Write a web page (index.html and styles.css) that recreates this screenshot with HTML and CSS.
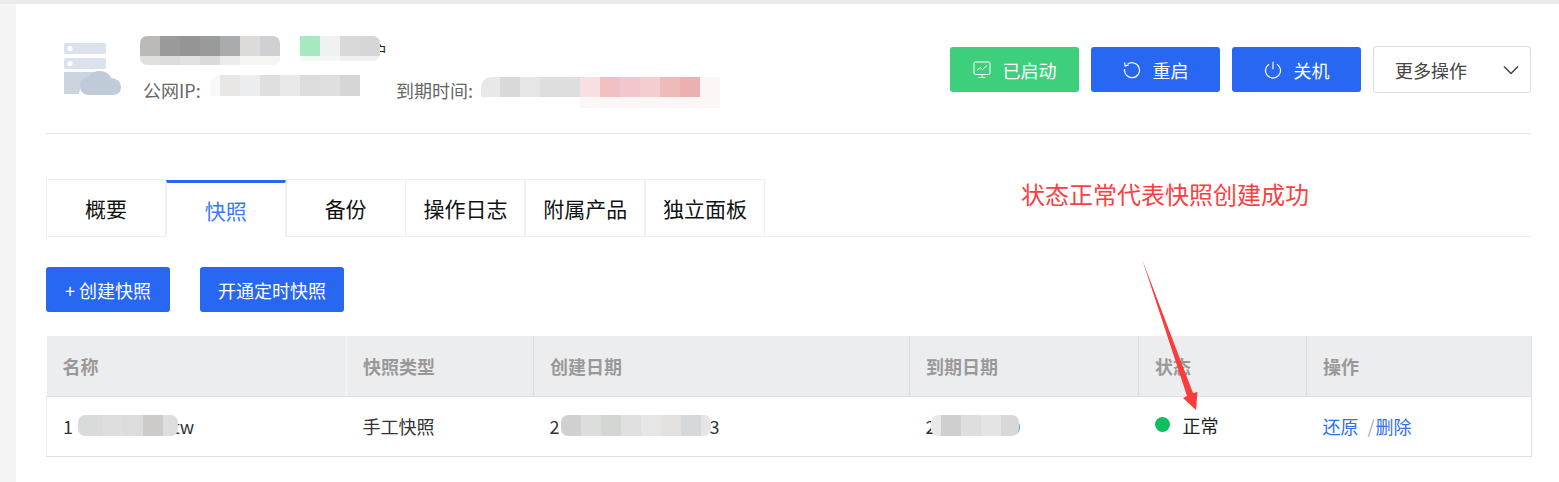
FILE: index.html
```html
<!DOCTYPE html>
<html lang="en">
<head>
  <meta charset="UTF-8" />
  <title>快照</title>
  <link rel="stylesheet" href="styles.css">
</head>
<body>
  <div class="card">
    <div class="head">
      <div class="summary">
        <svg class="server-icon" viewBox="63 42 60 54">
          <rect x="64" y="43" width="42" height="11" rx="2" fill="#dbe2ec" />
          <circle cx="70" cy="48.5" r="2.6" fill="#fff" />
          <rect x="64" y="58" width="42" height="11" rx="2" fill="#dbe2ec" />
          <circle cx="70" cy="63.5" r="2.6" fill="#fff" />
          <path d="M64 72h42l-16 4q-9 4-11 18h-15z" fill="#ccd4df" />
          <path d="M88 95q-8-1-8-9 0-8 9-10 4-5 11-5 8 0 11 7 10 1 10 9 0 8-9 8z" fill="#c0cbd9" />
        </svg>
        <div class="info">
          <div class="title-row">
            <span class="mosaic m-title-a"></span>
            <span class="mosaic m-title-b"></span>
            <span class="title-end">户</span>
          </div>
          <div class="meta-row">
            <span class="meta-label ip-label">公网IP:</span>
            <span class="mosaic m-ip"></span>
            <span class="meta-label date-label">到期时间:</span>
            <span class="mosaic m-date"></span>
          </div>
        </div>
      </div>
      <div class="head-actions">
        <button class="btn btn-green">
          <svg class="btn-icon" viewBox="0 0 18 18" fill="none" stroke="#fff" stroke-width="1">
            <rect x="1" y="1" width="16" height="12.5" rx="1.5" />
            <path d="M4 9.5l3-3 2.5 2 4.5-4" />
            <path d="M5.5 16.5h7M9 13.5v3" />
          </svg>
          已启动
        </button>
        <button class="btn">
          <svg class="btn-icon" viewBox="0 0 18 18" fill="none" stroke="#fff" stroke-width="1.2">
            <path d="M4.5 3.2A7.5 7.5 0 1 1 1.6 8" />
            <path d="M1.6 1.4l.6 3.6 3.4-.9" />
          </svg>
          重启
        </button>
        <button class="btn">
          <svg class="btn-icon" viewBox="0 0 18 18" fill="none" stroke="#fff" stroke-width="1.2">
            <path d="M5 3.2a7.5 7.5 0 1 0 8 0" />
            <path d="M9 .8v7.4" />
          </svg>
          关机
        </button>
        <div class="more">
          更多操作
          <svg class="chevron" viewBox="0 0 16 10" fill="none" stroke="#444" stroke-width="1.5">
            <path d="M1 1.5l7 7 7-7" />
          </svg>
        </div>
      </div>
    </div>

    <div class="tabs">
      <div class="tab">概要</div>
      <div class="tab active">快照</div>
      <div class="tab">备份</div>
      <div class="tab">操作日志</div>
      <div class="tab">附属产品</div>
      <div class="tab">独立面板</div>
    </div>

    <div class="toolbar">
      <button class="btn btn-create">+ 创建快照</button>
      <button class="btn btn-timer">开通定时快照</button>
    </div>

    <table class="snapshots">
      <colgroup>
        <col class="col-name"><col class="col-type"><col class="col-created"><col class="col-expire"><col class="col-status"><col class="col-ops">
      </colgroup>
      <thead>
        <tr>
          <th>名称</th>
          <th>快照类型</th>
          <th>创建日期</th>
          <th>到期日期</th>
          <th>状态</th>
          <th>操作</th>
        </tr>
      </thead>
      <tbody>
        <tr>
          <td><span class="cell-flex">1<span class="mosaic m-name"></span><span class="tail-name">tw</span></span></td>
          <td>手工快照</td>
          <td><span class="cell-flex">2<span class="mosaic m-created"></span><span class="tail-created">3</span></span></td>
          <td><span class="cell-flex">2<span class="mosaic m-expire"></span><span class="tail-expire">9</span></span></td>
          <td><span class="status"><i class="dot"></i>正常</span></td>
          <td class="ops"><a>还原</a><span class="sep">/</span><a>删除</a></td>
        </tr>
      </tbody>
    </table>
  </div>

  <div class="note">状态正常代表快照创建成功</div>
  <svg class="note-arrow" viewBox="1140 255 60 160">
    <path d="M1142 259L1193 393 1197.500 392 1196 410 1183 398 1187 396z" fill="#fb3c3c" />
  </svg>
</body>
</html>
```

FILE: styles.css
```css
* {
  box-sizing: border-box;
}

html, body {
  height: 100%;
}

body {
  margin: 0;
  padding: 4px 0 0 16px;
  background: linear-gradient(#ebebeb 4px, #f4f4f4 4px);
  font-family: "Noto Sans CJK SC", "Liberation Sans", sans-serif;
  font-size: 18px;
  color: #333;
  overflow: hidden;
}

.card {
  height: 100%;
  padding: 0 28px 0 30px;
  background: #fff;
}

/* Head */
.head {
  display: flex;
  justify-content: space-between;
  align-items: flex-start;
  height: 130px;
  padding-top: 32px;
  border-bottom: 1px solid #e8e8e8;
}

.summary {
  display: flex;
  align-items: flex-start;
  padding-left: 17px;
}

.server-icon {
  width: 60px;
  height: 54px;
  margin-top: 6px;
}

.info {
  margin-left: 17px;
}

.title-row {
  display: flex;
  height: 29px;
}

.title-end {
  margin-left: -7px;
  margin-top: 2px;
  font-size: 14px;
  line-height: 24px;
  color: #222;
}

.meta-row {
  display: flex;
  align-items: flex-start;
  margin-top: 10px;
  padding-left: 3px;
}

.meta-label {
  margin-top: 4px;
  line-height: 22px;
  color: #666;
  white-space: nowrap;
}

.ip-label {
  width: 67px;
}

.date-label {
  width: 85px;
  margin-left: 36px;
}

/* Pixelated cover-ups */
.mosaic {
  display: block;
  flex: none;
  border-radius: 7px;
  position: relative;
  z-index: 1;
}

.m-title-a {
  width: 140px;
  height: 29px;
  background:
    linear-gradient(to right, #bbbab8 20px, #9a9a9a 0 40px, #959595 0 60px, #999a9a 0 80px, #a9aaab 0 100px, #dcdbd9 0 120px, #cfd0d3 0) top / 100% 20px no-repeat,
    linear-gradient(to right, #e0e0de 20px, #dcdcdc 0 40px, #e0e1e0 0 60px, #dadada 0 80px, #ececec 0 100px, #f5f5f4 0);
}

.m-title-b {
  width: 80px;
  height: 25px;
  margin-left: 20px;
  border-radius: 0 7px 7px 0;
  background:
    linear-gradient(to right, #a6e8c0 20px, #eff2f0 0 40px, #d9d9d9 0 60px, #d6d6d6 0) top / 100% 20px no-repeat,
    linear-gradient(to right, #f0fbf5 20px, #f5f6f5 0 40px, #f0f0f0 0);
}

.m-ip {
  width: 150px;
  height: 21px;
  border-radius: 10px 0 0 0;
  background: linear-gradient(to right, #f8f8f8 10px, #e8e7e5 0 30px, #ecedee 0 50px, #dfdfdf 0 70px, #e9e9e9 0 90px, #dcdcdc 0 110px, #dfdfdf 0 130px, #d6d6d6 0);
}

.m-date {
  width: 239px;
  height: 31px;
  margin-top: 2px;
  border-radius: 10px 0 0 0;
  background:
    linear-gradient(to right, #e8e8e8 19px, #d9d9d9 0 39px, #e6e6e6 0 59px, #dedede 0 99px, #f7e0e1 0 119px, #f0c0c2 0 139px, #f2c6cc 0 159px, #f4cdd0 0 179px, #eebbbb 0 199px, #ebb0b2 0 219px, #fdf6f7 0) top / 100% 20px no-repeat,
    linear-gradient(to right, #fff 99px, #fcf7f7 0);
}

.m-name {
  width: 100px;
  height: 21px;
  margin: -1px 0 0 5px;
  background: linear-gradient(to right, #d9dbda 25px, #dedede 0 45px, #dcdcdc 0 65px, #cccbc9 0 85px, #dedede 0);
}

.tail-name {
  margin-left: -5px;
}

.m-created {
  width: 150px;
  height: 21px;
  margin: -1px 0 0 1px;
  background: linear-gradient(to right, #d0d0d0 20px, #dddddd 0 40px, #d4d6d4 0 60px, #e0e0e0 0 80px, #e6e6e6 0 100px, #e2e1df 0 120px, #d6d8da 0 140px, #e6e6e6 0);
}

.tail-created {
  margin-left: -1px;
}

.m-expire {
  width: 88px;
  height: 21px;
  margin: -1px 0 0 -5px;
  background: linear-gradient(to right, #e8e8e8 10px, #cfcfcf 0 30px, #dedede 0 50px, #e4e4e4 0 70px, #d8d8d8 0);
}

.tail-expire {
  margin-left: -8px;
  color: #2767f2;
}

.head-actions {
  display: flex;
  align-items: center;
  gap: 12px;
  margin-top: 10px;
}

.btn {
  display: flex;
  align-items: center;
  justify-content: center;
  width: 129px;
  height: 45px;
  padding: 0;
  border: 0;
  border-radius: 3px;
  background: #2767f2;
  font: inherit;
  color: #fff;
}

.btn-green {
  background: #3ecf7d;
}

.btn-icon {
  width: 18px;
  height: 18px;
  margin-right: 12px;
}

.more {
  display: flex;
  align-items: center;
  justify-content: space-between;
  width: 158px;
  height: 47px;
  padding: 0 11px 0 21px;
  border: 1px solid #d8dbe3;
  border-radius: 3px;
  color: #444;
}

.chevron {
  width: 16px;
  height: 10px;
}

/* Tabs */
.tabs {
  display: flex;
  height: 58px;
  margin-top: 45px;
  border-bottom: 1px solid #efefef;
}

.tab {
  display: flex;
  align-items: center;
  justify-content: center;
  width: 120px;
  height: 58px;
  margin-right: -0.200px;
  border: 1px solid #efefef;
  border-bottom: 1px solid #efefef;
  font-size: 21px;
  color: #111;
}

.tab.active {
  border-top: 3px solid #2767f2;
  border-bottom-color: #fff;
  margin-top: 1px;
  height: 57px;
  color: #3b78f5;
}

.toolbar {
  display: flex;
  gap: 30px;
  margin-top: 30px;
}

.btn-create {
  width: 124px;
}

.btn-timer {
  width: 144px;
}

/* Snapshot table */
.snapshots {
  width: 1485px;
  margin-top: 24px;
  border-collapse: collapse;
  table-layout: fixed;
}

.col-name { width: 300px; }
.col-type { width: 187px; }
.col-created { width: 376px; }
.col-expire { width: 229px; }
.col-status { width: 168px; }
.col-ops { width: 225px; }

.snapshots th {
  height: 60px;
  padding: 0 0 0 16px;
  background: #ecedef;
  border-right: 1px solid #dcdde0;
  border-bottom: 1px solid #dfe0e3;
  text-align: left;
  font-size: 18px;
  font-weight: 700;
  color: #999;
}

.snapshots th:first-child {
  border-right-color: #f6f6f7;
}

.snapshots th:last-child {
  border-right: 1px solid #e0e0e0;
}

.snapshots td {
  height: 60px;
  padding: 0 0 0 16px;
  border-bottom: 1px solid #e0e0e0;
  color: #333;
}

.snapshots td:first-child {
  border-left: 1px solid #eeeeee;
}

.snapshots td:last-child {
  border-right: 1px solid #e0e0e0;
}

.cell-flex {
  display: flex;
  align-items: center;
}

.status {
  display: flex;
  align-items: center;
  margin-top: -3px;
  color: #222;
}

.dot {
  width: 15px;
  height: 15px;
  margin-right: 13px;
  border-radius: 50%;
  background: #0fbf5f;
}

.ops a {
  color: #2f6ff0;
}

.sep {
  margin: 0 1px 0 9px;
  color: #aaa;
}

/* Red annotation drawn over the page */
.note {
  position: absolute;
  left: 1021px;
  top: 176px;
  font-size: 24px;
  line-height: 36px;
  color: #fb3f3f;
  white-space: nowrap;
  z-index: 5;
}

.note-arrow {
  position: absolute;
  left: 1140px;
  top: 255px;
  width: 60px;
  height: 160px;
  z-index: 5;
}
```
